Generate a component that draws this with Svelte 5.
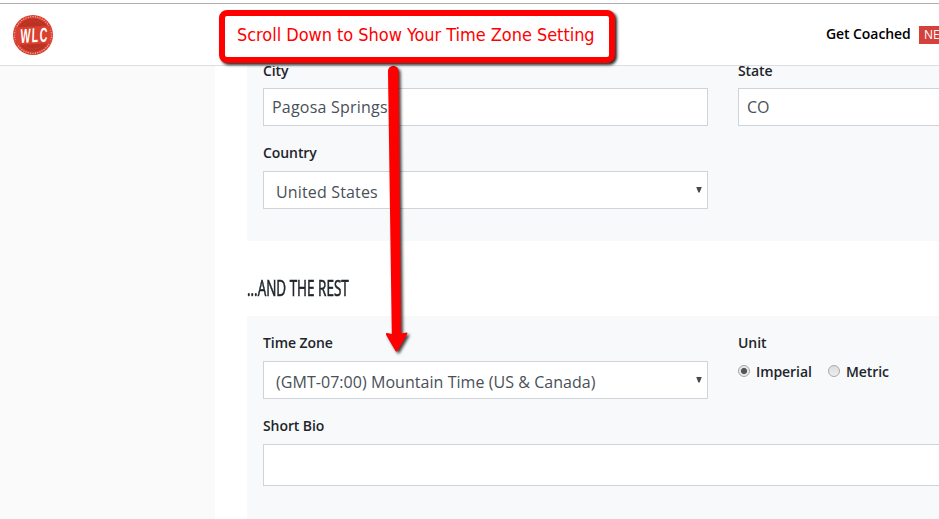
<script>
  const ticks = Array.from({ length: 48 }, (_, i) => i * 7.5);
</script>

<div class="page">
  <header>
    <svg class="logo" width="40" height="40" viewBox="0 0 40 40" aria-label="WLC">
      <circle cx="20" cy="20" r="20" fill="#d6402f" />
      {#each ticks as angle}
        <circle cx="20" cy="1.7" r=".6" fill="#f6cbc5" transform="rotate({angle} 20 20)" />
      {/each}
      <circle cx="20" cy="20" r="16.5" fill="#b93224" />
      <circle cx="20" cy="20" r="14.2" fill="none" stroke="#cb3b2c" stroke-width=".7" />
      <path d="M2.500 12.500 37.500 10.500V28.500L2.500 30Z" fill="#d9402f" />
      <g transform="translate(7.300 27.900) rotate(-3) skewX(-5) scale(.53 1)">
        <text x="0" y="0" letter-spacing="2.500">WLC</text>
      </g>
    </svg>
    <nav>
      <span class="coached">Get Coached</span>
      <span class="badge">NEW</span>
    </nav>
  </header>

  <div class="body">
    <aside></aside>
    <main>
      <section class="panel address">
        <div class="row">
          <div class="field">
            <span class="label">City</span>
            <div class="input city">Pagosa Springs</div>
          </div>
          <div class="field">
            <span class="label">State</span>
            <div class="input">CO</div>
          </div>
        </div>
        <div class="field">
          <span class="label">Country</span>
          <div class="input select"><span class="country">United States</span><i class="arrow"></i></div>
        </div>
      </section>

      <h2><span>...AND THE REST</span></h2>

      <section class="panel rest">
        <div class="row">
          <div class="field">
            <span class="label zone">Time Zone</span>
            <div class="input select"><span class="tz">(GMT-07:00) Mountain Time (US &amp; Canada)</span><i class="arrow"></i></div>
          </div>
          <div class="field">
            <span class="label">Unit</span>
            <div class="radios">
              <i class="radio on"></i><span class="imperial">Imperial</span>
              <i class="radio"></i><span class="metric">Metric</span>
            </div>
          </div>
        </div>
        <div class="field bio">
          <span class="label">Short Bio</span>
          <div class="input"></div>
        </div>
      </section>
    </main>
  </div>

  <svg class="pointer" width="40" height="300" viewBox="380 60 40 300">
    <path d="M388 71a5.3 5.3 0 0 1 10.6 0L401 333.5Q404 333 406.5 332.5Q408 332.700 407 334.500L397.500 351Q396.500 352 395.500 351L386 334.800Q385.500 333 387 333L391.800 334Z" fill="#f00" />
  </svg>
  <div class="callout"><span>Scroll Down to Show Your Time Zone Setting</span></div>
</div>

<style>
  .page {
    position: relative;
    width: 939px;
    height: 519px;
    overflow: hidden;
    background: #fff;
    color: #212529;
    font-family: "Open Sans", sans-serif;
  }
  header {
    display: flex;
    align-items: flex-start;
    justify-content: space-between;
    box-sizing: border-box;
    height: 66px;
    padding-left: 13px;
    background: linear-gradient(#b0b0b0, #b0b0b0) 0 3px / 100% 1px no-repeat #fff;
    border-bottom: 1px solid #dcdfe2;
  }
  .logo {
    margin-top: 15px;
    overflow: visible;
  }
  .logo text {
    fill: #fff;
    font: bold 20px "Liberation Sans", sans-serif;
  }
  nav {
    display: flex;
    align-items: center;
    flex: none;
    width: 113px;
    margin-top: 24px;
    height: 21px;
    color: #000;
  }
  .coached {
    flex: none;
    width: 93px;
    margin-top: -2px;
    font-size: 14px;
    font-weight: 600;
    line-height: 20px;
    letter-spacing: -.08px;
    white-space: nowrap;
  }
  .badge {
    flex: none;
    box-sizing: border-box;
    width: 40px;
    height: 18px;
    padding-left: 5px;
    margin-top: 1px;
    background: #d6403a;
    color: #fff;
    font-size: 12px;
    line-height: 18px;
  }
  .body {
    display: flex;
    height: 453px;
    overflow: hidden;
  }
  aside {
    flex: none;
    width: 215px;
    background: #fafafa;
  }
  main {
    flex: none;
    width: 724px;
    box-sizing: border-box;
    padding-left: 32px;
    overflow: hidden;
  }
  .panel {
    box-sizing: border-box;
    width: 960px;
    padding-left: 16px;
    background: #f8f9fb;
  }
  .address {
    height: 175px;
  }
  .address .row {
    height: 77px;
  }
  .address .row .label {
    height: 22px;
    line-height: 9px;
  }
  .rest {
    height: 220px;
    padding-top: 17px;
  }
  .row {
    display: flex;
    gap: 30px;
    height: 83px;
  }
  .field {
    width: 445px;
  }
  .label {
    display: block;
    height: 28px;
    line-height: 20px;
    font-size: 14px;
    font-weight: 600;
    letter-spacing: -.08px;
    color: #212529;
  }
  .input {
    box-sizing: border-box;
    height: 38px;
    padding-left: 8px;
    border: 1px solid #ced4da;
    background: #fff;
    color: #495057;
    font-size: 16px;
    line-height: 37px;
    white-space: nowrap;
  }
  .city {
    letter-spacing: .22px;
  }
  .country {
    letter-spacing: .16px;
  }
  .tz {
    letter-spacing: .05px;
  }
  .select {
    display: flex;
    align-items: center;
    justify-content: space-between;
    padding: 2px 5px 0 12px;
  }
  .select span {
    padding-top: 2px;
  }
  .arrow {
    width: 6px;
    height: 6px;
    margin-top: -3px;
    background: #444b50;
    clip-path: polygon(0 0, 100% 0, 60% 100%, 40% 100%);
  }
  .bio {
    width: 900px;
  }
  .bio .input {
    height: 42px;
  }
  h2 {
    display: flex;
    align-items: center;
    height: 75px;
    margin: 0;
    padding-top: 18px;
    box-sizing: border-box;
  }
  h2 span {
    font: 400 21px/30px "Open Sans", sans-serif;
    transform: scaleX(.643);
    transform-origin: left;
    white-space: nowrap;
    -webkit-text-stroke: .6px #212529;
  }
  .radios {
    display: flex;
    align-items: center;
    height: 22px;
    font-size: 14px;
    font-weight: 600;
    line-height: 18px;
    letter-spacing: -.08px;
  }
  .radio {
    flex: none;
    box-sizing: border-box;
    width: 12px;
    height: 12px;
    margin-top: -2px;
    border: 1px solid #aaa;
    border-radius: 50%;
    background: linear-gradient(#ddd, #eee);
  }
  .radio.on {
    background: radial-gradient(circle, #555 0 2.7px, #e5e5e5 3.4px);
  }
  .imperial {
    width: 72px;
    margin-left: 6px;
  }
  .metric {
    margin-left: 6px;
  }
  .pointer {
    position: absolute;
    left: 380px;
    top: 60px;
    filter: drop-shadow(2px 2px 1.5px rgba(0, 0, 0, .75));
  }
  .callout {
    position: absolute;
    left: 219px;
    top: 10px;
    box-sizing: border-box;
    width: 396px;
    height: 53px;
    padding-left: 12px;
    border: 6px solid #f00;
    border-radius: 8px;
    background: #fff;
    box-shadow: 2px 2px 3px rgba(0, 0, 0, .85);
    color: #f00;
    font: 18px/38px "DejaVu Sans Condensed", "DejaVu Sans", sans-serif;
    letter-spacing: -.04px;
    white-space: nowrap;
  }
</style>
